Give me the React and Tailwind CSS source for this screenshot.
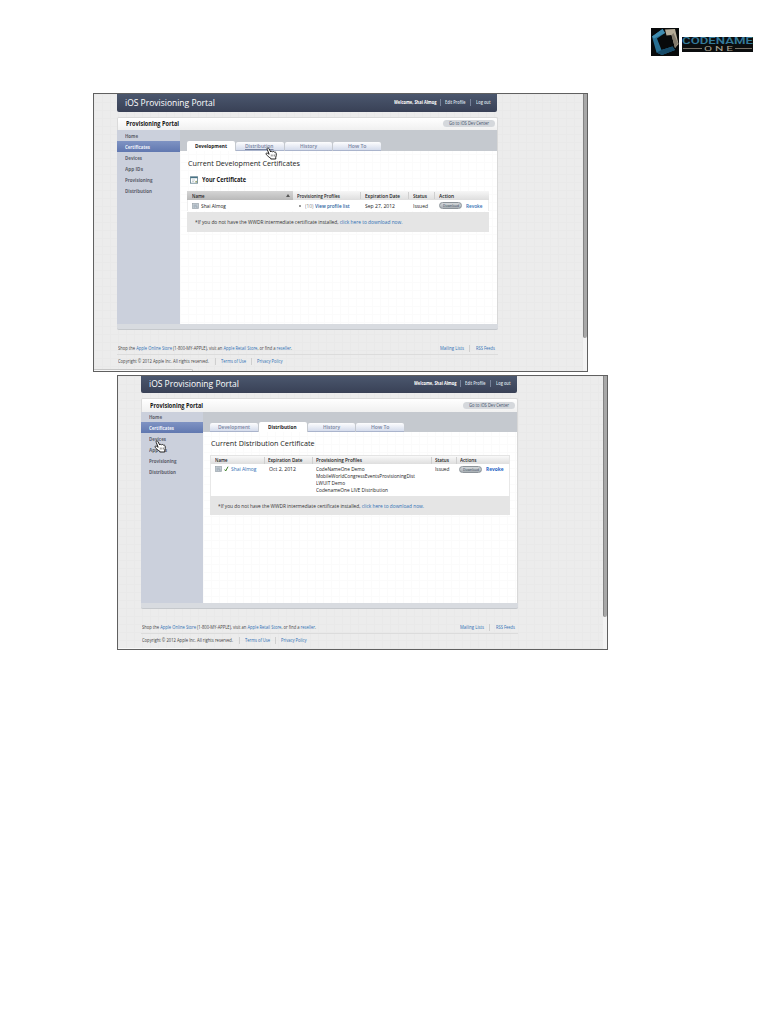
import React, { useLayoutEffect, useRef, useState } from "react";

// Single-line text stretched or condensed horizontally so that it spans `w` pixels.
function T({ w, className = "", children }) {
  const ref = useRef(null);
  const [scale, setScale] = useState(1);
  useLayoutEffect(() => {
    const el = ref.current;
    el.style.transform = "none";
    const natural = el.getBoundingClientRect().width;
    el.style.transform = `scaleX(${w / natural})`;
    setScale(w / natural);
  }, [w]);
  return (
    <span className={`block shrink-0 whitespace-nowrap ${className}`} style={{ width: w }}>
      <span ref={ref} className="block w-max origin-left" style={{ transform: `scaleX(${scale})` }}>
        {children}
      </span>
    </span>
  );
}

const LINK = "text-[#2f6fb4]";

function Hand({ className }) {
  return (
    <svg className={`absolute h-[13px] w-[12px] ${className}`} viewBox="0 0 24 26">
      <path
        d="M4.500 5C3 2 6.500.5 8 3.500l3.500 6.500c.8-1.800 3-1.600 3.700-.2 1-1.400 3-1 3.600.6 1.500-.8 3.200.2 3.500 2 .6 3 .3 5.500-.8 8V24H11.500v-1.500c-2-.8-5.500-4-9-7.500-1.500-2 .5-3.800 2.800-2.500l3 2z"
        fill="#fff"
        stroke="#222"
        strokeWidth="2"
        strokeLinejoin="round"
      />
      <path d="M12.500 15v4M15.700 15v4M18.900 15v4" stroke="#444" strokeWidth="1.200" />
    </svg>
  );
}

function CertIcon({ className }) {
  return (
    <svg className={`shrink-0 ${className}`} viewBox="0 0 8 7">
      <rect x=".4" y=".4" width="7.200" height="6.200" fill="#d3dae0" stroke="#98a2aa" strokeWidth=".8" />
      <path d="M1.500 2.300h5M1.500 3.600h4M1.500 4.900h2.500" stroke="#7d8e9c" strokeWidth=".7" />
      <circle cx="5.700" cy="4.800" r=".9" fill="#8b99a5" />
    </svg>
  );
}

function Download() {
  return (
    <span className="flex h-[7px] w-[23px] shrink-0 items-center justify-center rounded-full border border-[#8b9298] bg-linear-to-b from-[#d3d7da] to-[#a9b0b5]">
      <T w={16} className="text-[4px] leading-[5px] text-[#36495a]">Download</T>
    </span>
  );
}

const NAV = [
  ["Home", 13],
  ["Certificates", 25],
  ["Devices", 17],
  ["App IDs", 18],
  ["Provisioning", 27.5],
  ["Distribution", 27],
];

function Nav({ className, first }) {
  return (
    <nav className={`flex shrink-0 flex-col bg-[#cbd0dc] ${className}`}>
      {NAV.map(([label, w], i) => (
        <div
          key={label}
          className={`flex shrink-0 items-center pl-[8px] text-[5.200px] font-bold leading-[6px] ${i === 0 ? first : "h-[11px]"} ${
            i === 1 ? "bg-linear-to-b from-[#7f93c3] to-[#6178b0] text-[#f0f3fa]" : "text-[#5d626c]"
          }`}
        >
          <T w={w}>{label}</T>
        </div>
      ))}
    </nav>
  );
}

const TABS = [
  ["Development", 32],
  ["Distribution", 28.5],
  ["History", 17],
  ["How To", 18.5],
];

function Tabs({ active, hovered, className }) {
  return (
    <div className={`flex shrink-0 items-end gap-[1px] bg-[#c5c9cf] pl-[7px] ${className}`}>
      {TABS.map(([label, w], i) => (
        <div
          key={label}
          className={`flex w-[47.800px] shrink-0 items-center justify-center rounded-t-[2px] text-[6px] leading-[8px] ${
            i === active
              ? "h-[10px] bg-white font-bold text-[#222]"
              : "h-[9px] border-b border-[#aab4cc] bg-linear-to-b from-[#fdfdfe] to-[#d5dcec] font-semibold text-[#76829f]"
          } ${i === hovered ? "underline" : ""}`}
        >
          <T w={w}>{label}</T>
        </div>
      ))}
    </div>
  );
}

function Divider({ className = "" }) {
  return <span className={`h-[7px] w-px shrink-0 ${className}`} />;
}

function Portal({ frame, column, bar, top, nav, first, tabs, status, thumb, active, hovered, children, cursor }) {
  return (
    <section
      className={`relative flex shrink-0 overflow-hidden border border-[#606060] bg-[#ececec] bg-[linear-gradient(90deg,#e9e9e9_1px,transparent_1px),linear-gradient(#e9e9e9_1px,transparent_1px)] bg-[size:8px_8px] ${frame}`}
    >
      <div className={`flex shrink-0 flex-col ${column}`}>
        <header
          className={`flex shrink-0 items-center justify-between rounded-b-[2px] bg-linear-to-b from-[#4b576e] to-[#394156] pl-[8px] pr-[7px] text-white ${bar}`}
        >
          <T w={90} className="-mt-px text-[9.500px] leading-[12px]">iOS Provisioning Portal</T>
          <div className="-mt-[2px] flex items-center text-[4.800px] font-semibold leading-[7px]">
            <T w={42.5} className="font-bold">Welcome, Shai Almog</T>
            <Divider className="ml-[4px] bg-[#78839a]" />
            <T w={20.5} className="ml-[4px] text-[#dfe3eb]">Edit Profile</T>
            <Divider className="ml-[4px] bg-[#78839a]" />
            <T w={14.5} className="ml-[5px] text-[#dfe3eb]">Log out</T>
          </div>
        </header>
        <div className={`flex shrink-0 items-center justify-between rounded-t-[2px] border border-b-0 border-[#dadada] bg-linear-to-b from-white to-[#f0f0f0] pl-[8px] pr-[2px] ${top}`}>
          <T w={53} className="text-[6.200px] font-bold leading-[8px] text-[#161616]">Provisioning Portal</T>
          <span className="-mt-px flex h-[7px] w-[52px] items-center justify-center rounded-full bg-[#d5d8dc]">
            <T w={40} className="text-[5px] leading-[7px] text-[#3e4f6b]">Go to iOS Dev Center</T>
          </span>
        </div>
        <div className={`flex shrink-0 ${status}`}>
          <Nav className={nav} first={first} />
          <div className="flex min-w-0 flex-1 flex-col border-r border-[#d8d8d8] bg-white bg-[linear-gradient(90deg,#fbfbfb_1px,transparent_1px),linear-gradient(#fbfbfb_1px,transparent_1px)] bg-[size:8px_8px]">
            <Tabs active={active} hovered={hovered} className={tabs} />
            {children}
          </div>
        </div>
        <div className="h-[6px] shrink-0 rounded-b-[2px] border-b border-[#c5c8cc] bg-[#d8dbe0]" />
        <footer className="flex flex-col pt-[11px] text-[5px] leading-[7px] text-[#444]">
          <div className="flex h-[14px] items-center justify-between border-b border-[#dcdcdc] pl-px pr-[3px] pt-[2px]">
            <T w={174}>
              Shop the <span className={LINK}>Apple Online Store</span> (1-800-MY-APPLE), visit an{" "}
              <span className={LINK}>Apple Retail Store</span>, or find a <span className={LINK}>reseller</span>.
            </T>
            <div className="flex items-center">
              <T w={24} className={LINK}>Mailing Lists</T>
              <Divider className="ml-[5px] bg-[#cfcfcf]" />
              <T w={19} className={`ml-[6px] ${LINK}`}>RSS Feeds</T>
            </div>
          </div>
          <div className="flex h-[13px] items-center pl-px">
            <T w={91}>Copyright © 2012 Apple Inc. All rights reserved.</T>
            <Divider className="ml-[5.500px] bg-[#cfcfcf]" />
            <T w={25} className={`ml-[5.500px] ${LINK}`}>Terms of Use</T>
            <Divider className="ml-[5px] bg-[#cfcfcf]" />
            <T w={25.5} className={`ml-[5px] ${LINK}`}>Privacy Policy</T>
          </div>
        </footer>
      </div>
      <div className="ml-auto w-[4px] shrink-0 bg-[#f3f3f3]">
        <div className={`rounded-b-[2px] border-l border-[#858585] bg-[#a8a8a8] ${thumb}`} />
      </div>
      {cursor}
    </section>
  );
}

function Note({ w, className }) {
  return (
    <div className={`flex shrink-0 items-center bg-[#e5e5e5] pl-[7.500px] text-[5.500px] leading-[8px] text-[#333] ${className}`}>
      <T w={w}>
        *If you do not have the WWDR intermediate certificate installed,{" "}
        <span className={LINK}>click here to download now.</span>
      </T>
    </div>
  );
}

function Logo() {
  return (
    <div className="flex items-center gap-[3px]">
      <svg className="h-[28px] w-[28px]" viewBox="0 0 28 28">
        <rect width="28" height="28" fill="#080a0b" />
        <path d="M11.500 1 1 8.500 5.500 24.500l5.500 2.500 13-5-2.500-3.500L10.500 22 6 10.500 14 5z" fill="#286f92" />
        <path d="M11.500 1 1 8.500l2 2L14 5z" fill="#408caf" />
        <path d="M5.500 24.500 11 27l13-5-2.500-3.500L10.500 22z" fill="#174b69" />
        <path d="M14 1.500 24 1l3.500 15-3.500 4-3.500-13-5 .5z" fill="#b5ac98" />
        <path d="M22.500 5 27 15l-3 5-3.500-13z" fill="#81796b" />
      </svg>
      <div className="mt-[4px] flex h-[15px] w-[71px] flex-col items-center bg-[#0b0d0e]">
        <T w={71} className="h-[9px] font-[Roboto] text-[9px] font-semibold leading-[9px] text-[#33799a]">CODENAME</T>
        <div className="flex h-[6px] items-center">
          <span className="h-px w-[19px] bg-[#777166]" />
          <T w={29} className="ml-[2px] font-[Roboto] text-[7px] leading-[6px] text-[#aaa495]">O N E</T>
          <span className="ml-[2px] h-px w-[17px] bg-[#777166]" />
        </div>
      </div>
    </div>
  );
}

export default function App() {
  return (
    <main className="flex h-[1011px] w-[781px] flex-col overflow-hidden bg-white font-['Open_Sans','Noto_Sans',sans-serif]">
      <div className="flex h-[93px] shrink-0 justify-end pr-[28px] pt-[28px]">
        <div className="h-[28px]"><Logo /></div>
      </div>

      <Portal
        frame="ml-[93px] h-[279px] w-[495px]"
        column="ml-[23px] w-[381px]"
        bar="h-[18px] w-[380px]"
        top="mt-[5px] h-[13px]"
        status="h-[194px]"
        nav="w-[63px]"
        first="h-[11px]"
        tabs="h-[21px]"
        thumb="h-[244px]"
        active={0}
        hovered={1}
        cursor={
          <>
            <Hand className="left-[171px] top-[53px]" />
            <span className="absolute -bottom-px left-0 h-[3px] w-[99px] rounded-tr-[2px] border-r border-t border-[#c6c6c6] bg-[#f8f8f8]" />
          </>
        }
      >
        <div className="flex h-[23px] shrink-0 items-center pl-[7.500px] text-[7.800px] leading-[10px] text-[#222]">
          <T w={112}>Current Development Certificates</T>
        </div>
        <div className="flex h-[11px] shrink-0 items-center pl-[10px] text-[6.500px] font-bold leading-[9px] text-[#181818]">
          <svg className="h-[8px] w-[8px] shrink-0" viewBox="0 0 8 8">
            <rect x=".4" y=".8" width="7.200" height="6.400" fill="#fff" stroke="#5f7f8e" strokeWidth=".8" />
            <path d="M.5 1.500h7" stroke="#467184" strokeWidth="1.400" />
            <path d="M2 4h3M2 5.500h2" stroke="#a5b3b7" strokeWidth=".6" />
            <circle cx="6.200" cy="5.800" r="1" fill="#9fa978" />
          </svg>
          <T w={44} className="ml-[4px]">Your Certificate</T>
        </div>
        <div className="ml-[7px] mt-[6px] flex w-[302px] shrink-0 flex-col text-[5.700px] leading-[8px] text-[#222]">
          <div className="flex h-[9px] items-center bg-linear-to-b from-[#f7f7f7] to-[#dedede] font-semibold">
            <div className="flex h-full w-[106px] items-center bg-linear-to-b from-[#d5d5d5] to-[#b9b9b9] pl-[5px]">
              <T w={12.5}>Name</T>
              <svg className="ml-[81px] h-[3px] w-[4px]" viewBox="0 0 4 3"><path d="M0 3 2 0l2 3z" fill="#555" /></svg>
            </div>
            <T w={43} className="ml-[4px]">Provisioning Profiles</T>
            <Divider className="ml-[20px] bg-[#cfcfcf]" />
            <T w={35} className="ml-[3.500px]">Expiration Date</T>
            <Divider className="ml-[8.500px] bg-[#cfcfcf]" />
            <T w={14} className="ml-[3.500px]">Status</T>
            <Divider className="ml-[7.500px] bg-[#cfcfcf]" />
            <T w={15} className="ml-[3.500px]">Action</T>
          </div>
          <div className="flex h-[11px] items-center border-x border-[#eee] bg-white pl-[4px]">
            <CertIcon className="h-[6px] w-[7px]" />
            <T w={25} className="ml-[2px]">Shai Almog</T>
            <span className="ml-[72.500px] h-[2px] w-[2px] rounded-full bg-[#777]" />
            <T w={8.5} className="ml-[4px] text-[#888]">(10)</T>
            <T w={34.5} className="ml-[1.500px] font-semibold text-[#2a5f9e]">View profile list</T>
            <T w={30} className="ml-[16px]">Sep 27, 2012</T>
            <T w={15} className="ml-[18px]">Issued</T>
            <span className="ml-[11px] flex"><Download /></span>
            <T w={16.5} className={`ml-[4px] font-semibold ${LINK}`}>Revoke</T>
          </div>
          <Note w={207.500} className="mt-[1px] h-[20px]" />
        </div>
      </Portal>

      <Portal
        frame="ml-[117px] mt-[3px] h-[275px] w-[491px]"
        column="ml-[23px] w-[377px]"
        bar="h-[17px] w-[376px]"
        top="mt-[5px] h-[14px]"
        status="h-[191px]"
        nav="w-[62px]"
        first="h-[10px]"
        tabs="h-[20px]"
        thumb="h-[241px]"
        active={1}
        cursor={
          <>
            <Hand className="left-[36px] top-[64px]" />
            <span className="absolute -bottom-px left-0 h-[2px] w-[72px] rounded-tr-[2px] bg-[#f8f8f8]" />
          </>
        }
      >
        <div className="flex h-[22px] shrink-0 items-center pl-[8px] text-[7.800px] leading-[10px] text-[#222]">
          <T w={103.5}>Current Distribution Certificate</T>
        </div>
        <div className="ml-[7px] mt-px flex w-[300px] shrink-0 flex-col text-[5.700px] leading-[7px] text-[#222]">
          <div className="flex h-[9px] items-center border-x border-t border-[#e4e4e4] bg-linear-to-b from-[#f9f9f9] to-[#dedede] pl-[4px] font-semibold">
            <T w={12.5}>Name</T>
            <Divider className="ml-[36.500px] bg-[#cfcfcf]" />
            <T w={34.5} className="ml-[3px]">Expiration Date</T>
            <Divider className="ml-[9px] bg-[#cfcfcf]" />
            <T w={46} className="ml-[3px]">Provisioning Profiles</T>
            <Divider className="ml-[69px] bg-[#cfcfcf]" />
            <T w={14} className="ml-[3.500px]">Status</T>
            <Divider className="ml-[7px] bg-[#cfcfcf]" />
            <T w={16.5} className="ml-[3px]">Actions</T>
          </div>
          <div className="flex h-[32px] items-start border-x border-[#e8e8e8] bg-white pl-[4px] pt-[2px]">
            <CertIcon className="h-[6px] w-[7px]" />
            <svg className="ml-[1.500px] h-[6px] w-[5px] shrink-0" viewBox="0 0 5 6"><path d="m.7 3.500 1 1.500L4 .7" fill="none" stroke="#3f7f2b" strokeWidth="1" /></svg>
            <T w={25.5} className={`ml-[2px] ${LINK}`}>Shai Almog</T>
            <T w={27} className="ml-[12.500px]">Oct 2, 2012</T>
            <div className="ml-[20px] flex w-[119px] shrink-0 flex-col">
              <T w={48.5}>CodeNameOne Demo</T>
              <T w={99}>MobileWorldCongressEventsProvisioningDist</T>
              <T w={29}>LWUIT Demo</T>
              <T w={72}>CodenameOne LIVE Distribution</T>
            </div>
            <T w={14.5}>Issued</T>
            <span className="ml-[10px] flex"><Download /></span>
            <T w={17.500} className="ml-[4px] font-bold text-[#2563c4]">Revoke</T>
          </div>
          <Note w={206} className="h-[19px]" />
        </div>
      </Portal>
    </main>
  );
}
